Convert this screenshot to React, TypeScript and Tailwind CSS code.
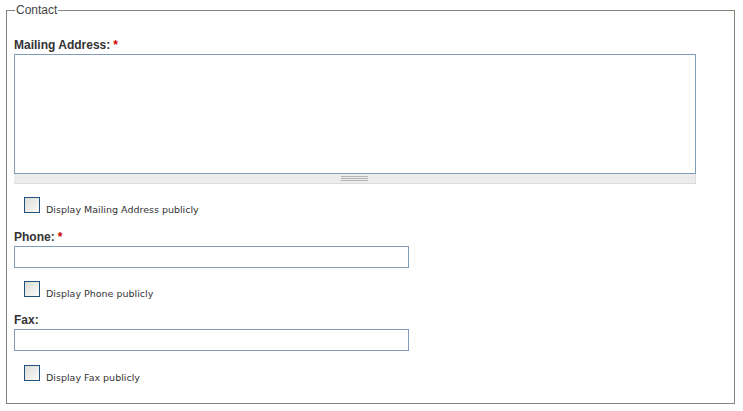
import React from 'react';

const FieldLabel = ({ text, required }: { text: string; required?: boolean }) => (
  <div className="h-[17px] text-[12px] font-bold leading-[17px] text-[#333]">
    {text}
    {required && <span className="ml-[3px] text-[#c00]">*</span>}
  </div>
);

const PublicCheck = ({ label }: { label: string }) => (
  <label className="ml-[10px] flex items-end h-[16px]">
    <span className="block h-[16px] w-[16px] border border-[#1c5180] bg-gradient-to-br from-[#dcdcd6] to-[#fbfbfa]" />
    <span className="ml-[6px] text-[9.5px] leading-[12px] text-[#333] font-['DejaVu_Sans',sans-serif] mb-[-3px]">
      {label}
    </span>
  </label>
);

export default function App() {
  return (
    <div className="h-[411px] w-[743px] bg-white font-['Liberation_Sans',Arial,sans-serif]">
      <fieldset className="ml-[6px] mt-[2px] h-[402px] w-[729px] border border-[#84847a] pl-[7px] pr-[7px]">
        <legend className="ml-[1px] px-[1px] text-[12px] leading-[16px] text-[#444]">Contact</legend>

        <div className="mt-[19px]">
          <FieldLabel text="Mailing Address:" required />
          <div className="w-[682px]">
            <textarea className="block h-[120px] w-full resize-none border border-[#7f9db9] bg-white" />
            <div className="flex h-[10px] items-center justify-center border-b border-r border-[#dcdcdc] bg-[#ececec]">
              <div className="flex w-[27px] flex-col gap-[1px]">
                <span className="h-[1px] bg-[#b4b4b4]" />
                <span className="h-[1px] bg-[#b4b4b4]" />
                <span className="h-[1px] bg-[#b4b4b4]" />
              </div>
            </div>
          </div>
        </div>

        <div className="mt-[13px]">
          <PublicCheck label="Display Mailing Address publicly" />
        </div>

        <div className="mt-[16px]">
          <FieldLabel text="Phone:" required />
          <input className="block h-[22px] w-[395px] border border-[#7f9db9] bg-white" />
        </div>

        <div className="mt-[13px]">
          <PublicCheck label="Display Phone publicly" />
        </div>

        <div className="mt-[15px]">
          <FieldLabel text="Fax:" />
          <input className="block h-[22px] w-[395px] border border-[#7f9db9] bg-white" />
        </div>

        <div className="mt-[14px]">
          <PublicCheck label="Display Fax publicly" />
        </div>
      </fieldset>
    </div>
  );
}
